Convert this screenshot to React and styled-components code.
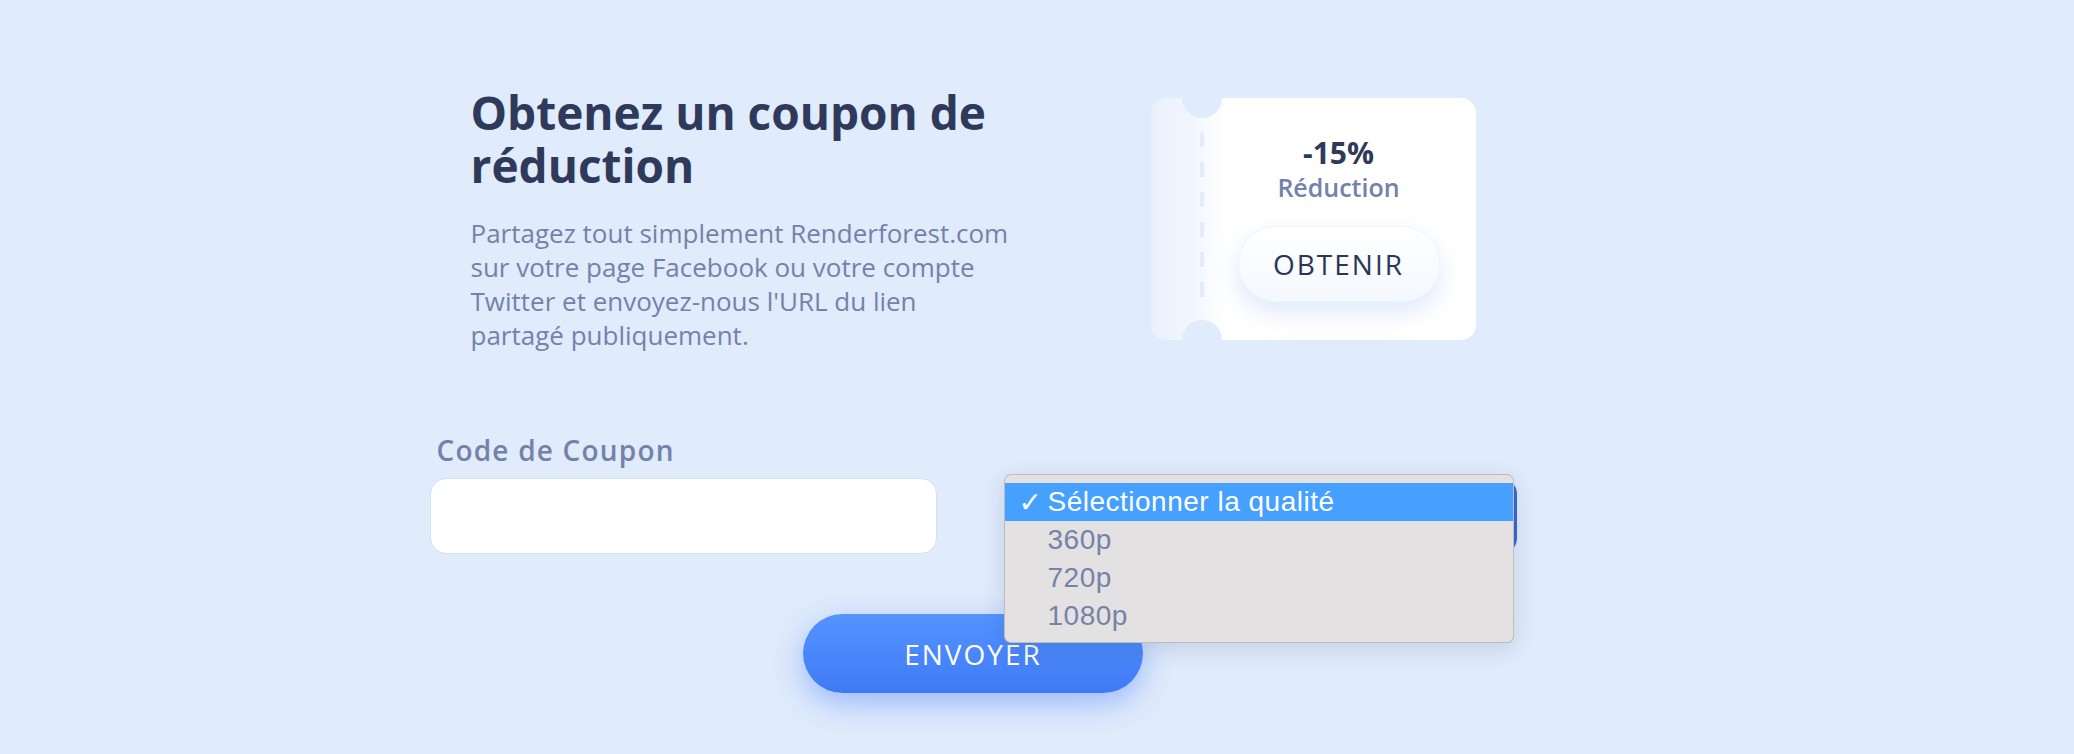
import styled, { createGlobalStyle } from 'styled-components'

const GlobalStyle = createGlobalStyle`
  body {
    margin: 0;
    background: #e0ebfb;
    font-family: 'Open Sans', 'DejaVu Sans', sans-serif;
  }
`

const qualities = ['360p', '720p', '1080p']

const App = () => {
  return (
    <Page>
      <GlobalStyle />
      <Content>
        <Intro>
          <TextBlock>
            <Title>
              <Line>Obtenez un coupon de</Line>
              <Line>réduction</Line>
            </Title>
            <Description>
              Partagez tout simplement Renderforest.com
              <br />
              sur votre page Facebook ou votre compte
              <br />
              Twitter et envoyez-nous l'URL du lien
              <br />
              partagé publiquement.
            </Description>
          </TextBlock>
          <Coupon>
            <Stub>
              <Dashes />
            </Stub>
            <CouponBody>
              <Percent>-15%</Percent>
              <CouponLabel>Réduction</CouponLabel>
              <GetButton>OBTENIR</GetButton>
            </CouponBody>
          </Coupon>
        </Intro>

        <Form>
          <Fields>
            <Field>
              <Label>Code de Coupon</Label>
              <Input type="text" />
            </Field>
            <SelectField>
              <SelectBox />
              <Popup>
                <Option selected>
                  <Check>✓</Check>Sélectionner la qualité
                </Option>
                {qualities.map(q => (
                  <Option key={q}>
                    <Check />
                    {q}
                  </Option>
                ))}
              </Popup>
            </SelectField>
          </Fields>
          <Submit>ENVOYER</Submit>
        </Form>
      </Content>
    </Page>
  )
}

//Style-------------------------------------------------------------------------

const Page = styled.div`
  min-height: 754px;
  box-sizing: border-box;
  padding: 86px 128px 0 0;
  display: flex;
  justify-content: center;
`

const Content = styled.div`
  width: 1087px;
  display: flex;
  flex-direction: column;
  align-items: center;
`

const Intro = styled.div`
  width: 1005px;
  display: flex;
  justify-content: space-between;
  align-items: flex-start;
`

const TextBlock = styled.div`
  display: flex;
  flex-direction: column;
`

const Title = styled.h1`
  margin: 0;
  font-size: 46px;
  font-weight: 700;
  color: #2f3a5b;
  white-space: nowrap;
`

const Line = styled.span`
  display: block;
  height: 53px;
  line-height: 53px;
`

const Description = styled.p`
  margin: 24px 0 0;
  font-size: 26px;
  line-height: 34px;
  color: #7482aa;
  white-space: nowrap;
`

const Coupon = styled.div`
  position: relative;
  margin-top: 12px;
  width: 325px;
  height: 242px;
  border-radius: 15px;
  overflow: hidden;
  display: flex;
  background: linear-gradient(to right, #e9f0fd 0, #f3f7fe 45px, #ffffff 75px);

  &::before,
  &::after {
    content: '';
    position: absolute;
    left: 31px;
    width: 40px;
    height: 40px;
    border-radius: 50%;
    background: #e0ebfb;
  }
  &::before {
    top: -20px;
  }
  &::after {
    bottom: -20px;
  }
`

const Stub = styled.div`
  width: 51px;
  display: flex;
  justify-content: flex-end;
  padding: 34px 0 40px;
  box-sizing: border-box;
`

const Dashes = styled.div`
  width: 4px;
  margin-right: -2px;
  border-radius: 2px;
  background: repeating-linear-gradient(
    to bottom,
    #e4ecfa 0,
    #e4ecfa 15px,
    transparent 15px,
    transparent 30px
  );
`

const CouponBody = styled.div`
  flex: 1;
  display: flex;
  flex-direction: column;
  align-items: center;
  padding-top: 37px;
`

const Percent = styled.div`
  font-size: 30px;
  line-height: 36px;
  font-weight: 700;
  color: #2f3a5b;
`

const CouponLabel = styled.div`
  font-size: 25px;
  line-height: 32px;
  font-weight: 600;
  color: #7482aa;
`

const GetButton = styled.button`
  margin-top: 23px;
  width: 202px;
  height: 76px;
  border: 1px solid #eef3fc;
  border-radius: 38px;
  background: linear-gradient(to bottom, #ffffff, #f4f8ff);
  box-shadow: 0 10px 24px rgba(160, 190, 240, 0.35);
  font-family: 'Open Sans', sans-serif;
  font-size: 28px;
  letter-spacing: 2px;
  color: #2b3656;
  cursor: pointer;
`

const Form = styled.div`
  width: 100%;
  margin-top: 81px;
  display: flex;
  flex-direction: column;
  align-items: center;
`

const Fields = styled.div`
  width: 100%;
  display: flex;
  justify-content: space-between;
  align-items: flex-end;
`

const Field = styled.div`
  display: flex;
  flex-direction: column;
`

const Label = styled.label`
  padding-left: 7px;
  margin-bottom: 11px;
  font-size: 28px;
  line-height: 34px;
  font-weight: 600;
  letter-spacing: 1.2px;
  color: #7482aa;
`

const Input = styled.input`
  width: 507px;
  height: 76px;
  box-sizing: border-box;
  border: 1px solid #d6e0f0;
  border-radius: 16px;
  background: #fff;
  outline: none;
`

const SelectField = styled.div`
  position: relative;
  width: 513px;
  height: 76px;
`

const SelectBox = styled.div`
  height: 100%;
  border-radius: 16px;
  background: #3a66d6;
`

const Popup = styled.div`
  position: absolute;
  top: -4px;
  left: 0;
  width: 510px;
  box-sizing: border-box;
  padding: 8px 0 7px;
  border: 1px solid rgba(0, 0, 0, 0.16);
  border-radius: 7px;
  background: #e3e1e2;
  box-shadow: 0 6px 22px rgba(40, 60, 110, 0.16);
  z-index: 2;
`

const Option = styled.div`
  height: 38px;
  display: flex;
  align-items: center;
  padding-left: 14px;
  font-family: 'Liberation Sans', Arial, sans-serif;
  font-size: 28px;
  letter-spacing: 0.5px;
  background: ${props => (props.selected ? '#45a0ff' : 'transparent')};
  color: ${props => (props.selected ? '#ffffff' : '#7683a8')};
`

const Check = styled.span`
  width: 29px;
  font-family: 'DejaVu Sans', sans-serif;
  font-size: 28px;
  letter-spacing: 0;
`

const Submit = styled.button`
  margin-top: 60px;
  width: 340px;
  height: 79px;
  border: none;
  border-radius: 40px;
  background: linear-gradient(to bottom, #5593ff, #3f7af6);
  box-shadow: 0 10px 30px rgba(66, 124, 255, 0.45);
  font-family: 'Open Sans', sans-serif;
  font-size: 28px;
  letter-spacing: 2px;
  color: #ffffff;
  cursor: pointer;
`

export default App
